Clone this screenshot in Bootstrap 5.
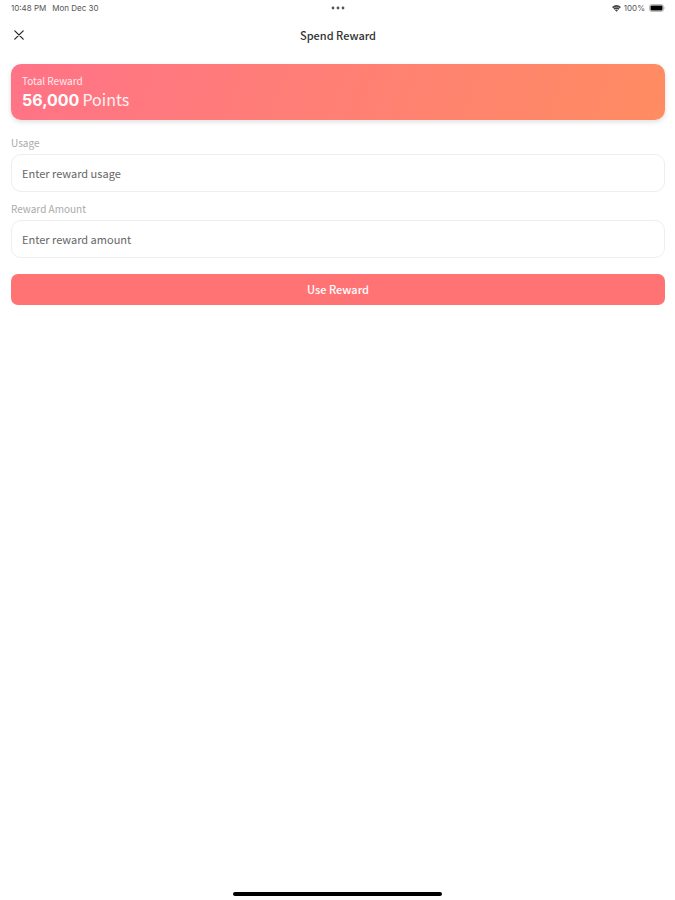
<!DOCTYPE html>
<html lang="en">
<head>
<meta charset="utf-8">
<meta name="viewport" content="width=device-width, initial-scale=1">
<title>Spend Reward</title>
<link href="https://cdn.jsdelivr.net/npm/bootstrap@5.3.0/dist/css/bootstrap.min.css" rel="stylesheet">
<style>
body { font-family: "Noto Sans CJK KR", "Noto Sans", sans-serif; color: #333; background: #fff; }
.gutter { padding-left: 11px; padding-right: 10px; }
.status-bar { height: 16px; font: 400 8px/16px Inter, sans-serif; color: #555; }
.status-bar svg, .title-bar svg { display: block; }
.status-date { gap: 6px; }
.status-icons { gap: 3px; }
.title-bar { height: 38px; }
.title-bar h1 { font-size: 11px; line-height: 16px; font-weight: 500; }
.close-btn { width: 16px; height: 16px; color: #222; }
.reward-card { margin-top: 10px; padding: 10px 11px; border-radius: 10px; color: #fff; background: linear-gradient(110deg, #ff7387, #ff8c62); box-shadow: 0 2px 5px rgba(0, 0, 0, .13); }
.reward-label { font-size: 10px; line-height: 14px; opacity: .85; }
.reward-total { gap: 3px; height: 22px; font-size: 16px; line-height: 22px; font-weight: 400; }
.reward-total span { opacity: .9; }
.reward-total strong { font: 700 16px/22px Inter, sans-serif; }
.reward-form { padding-top: 16px; }
.field-label { font-size: 10px; line-height: 14px; color: #aaa; }
.field-group { margin-bottom: 10px; }
.field-input { height: 38px; padding: 0 10px 1px; border: 1px solid #eee; border-radius: 10px; font-size: 11px; }
.field-input::placeholder { color: #666; opacity: 1; }
.submit-btn { height: 31px; margin-top: 6px; padding: 0; border: 0; border-radius: 7px; font-size: 11px; font-weight: 500; color: #fff; background: #ff7375; }
.submit-btn:hover { color: #fff; background: #f56769; }
.home-bar { width: 31%; height: 4px; margin-bottom: 4px; background: #000; }
</style>
<script src="https://cdn.jsdelivr.net/npm/bootstrap@5.3.0/dist/js/bootstrap.bundle.min.js"></script>
</head>
<body class="d-flex flex-column min-vh-100">
<div class="status-bar gutter row g-0 align-items-center">
  <div class="status-date col d-flex"><span>10:48 PM</span><span>Mon Dec 30</span></div>
  <div class="col-auto">
    <svg width="14" height="4" viewBox="0 0 14 4" fill="#555" aria-hidden="true"><circle cx="2" cy="2" r="1.4"/><circle cx="7" cy="2" r="1.4"/><circle cx="12" cy="2" r="1.4"/></svg>
  </div>
  <div class="status-icons col d-flex justify-content-end align-items-center">
    <svg width="9" height="7" viewBox="0 0 9 7" fill="none" stroke="#444" stroke-width="1.6" aria-hidden="true"><path d="M.6 2.6Q4.5-.9 8.4 2.6M2 4.2Q4.5 2 7 4.2"/><path d="M3 5.2Q4.5 4 6 5.2L4.5 6.8z" fill="#444" stroke="none"/></svg>
    <span>100%</span>
    <svg width="17" height="8" viewBox="0 0 17 8" aria-hidden="true"><rect x="1.5" y=".5" width="14" height="7" rx="2" fill="#fff" stroke="#bbb"/><rect x="2.5" y="1.5" width="12" height="5" rx="1"/><path d="M16 2.8q1.2 1.2 0 2.4z" fill="#aaa"/></svg>
  </div>
</div>
<header class="title-bar gutter row g-0 align-items-center">
  <div class="col">
    <button type="button" class="close-btn btn p-0 border-0 d-flex align-items-center justify-content-center" aria-label="Close">
      <svg width="10" height="10" viewBox="0 0 10 10" fill="none" stroke="currentColor" stroke-width="1.2" stroke-linecap="round"><path d="M.8.8l8.4 8.4M9.2.8L.8 9.2"/></svg>
    </button>
  </div>
  <h1 class="col-auto m-0">Spend Reward</h1>
  <div class="col"></div>
</header>
<main class="gutter flex-grow-1">
  <section class="reward-card">
    <div class="reward-label">Total Reward</div>
    <div class="reward-total d-flex align-items-baseline"><strong>56,000</strong><span>Points</span></div>
  </section>
  <form class="reward-form">
    <div class="field-group">
      <label class="field-label d-block mb-1" for="usage">Usage</label>
      <input class="field-input form-control" id="usage" type="text" placeholder="Enter reward usage">
    </div>
    <div class="field-group">
      <label class="field-label d-block mb-1" for="amount">Reward Amount</label>
      <input class="field-input form-control" id="amount" type="text" inputmode="numeric" placeholder="Enter reward amount">
    </div>
    <button type="button" class="submit-btn btn w-100">Use Reward</button>
  </form>
</main>
<div class="home-bar rounded-pill mx-auto"></div>
</body>
</html>
